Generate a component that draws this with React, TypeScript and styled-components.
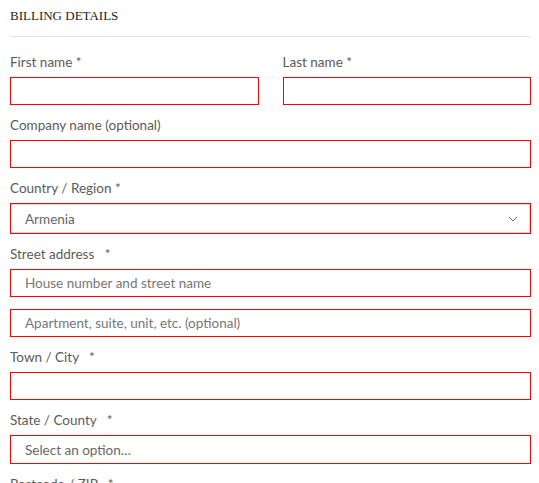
import styled, { createGlobalStyle } from "styled-components";

const Global = createGlobalStyle`
  body {
    margin: 0;
    background: #fff;
    font-family: Lato, "Open Sans", sans-serif;
  }
`;

const Page = styled.div`
  padding: 0 8px 0 10px;
`;

const Heading = styled.h3`
  margin: 0;
  padding: 8px 0 12px;
  font-family: "Liberation Serif", serif;
  font-weight: normal;
  font-size: 13px;
  line-height: 16px;
  color: #222;
  text-transform: uppercase;
  border-bottom: 1px solid #e2e2e2;
`;

const Fields = styled.div`
  display: flex;
  flex-direction: column;
  gap: 11px;
  padding-top: 16px;
`;

const Row = styled.div`
  display: grid;
  grid-template-columns: 1fr 1fr;
  gap: 24px;
`;

const Field = styled.div`
  display: flex;
  flex-direction: column;
  gap: 6px;
`;

const Label = styled.label`
  font-size: 13.5px;
  line-height: 18px;
  color: #5b5b5b;
  white-space: pre;
`;

const Input = styled.input`
  box-sizing: border-box;
  width: 100%;
  height: 28px;
  margin: 0;
  padding: 0 14px;
  border: 1px solid #ff0000;
  border-radius: 0;
  font-family: inherit;
  font-size: 13.5px;
  color: #555;
  outline: none;
  &::placeholder {
    color: #777;
  }
`;

const Extra = styled(Input)`
  margin-top: 6px;
`;

const Select = styled.div<{ $tall?: boolean }>`
  box-sizing: border-box;
  height: ${({ $tall }) => ($tall ? "31px" : "29px")};
  display: flex;
  align-items: center;
  justify-content: space-between;
  padding: 0 12px 0 14px;
  border: 1px solid #ff0000;
  box-shadow: ${({ $tall }) =>
    $tall ? "inset -1px 0 0 #d8d8d8, inset 0 1px 0 #d8d8d8, inset 0 -1px 0 #d8d8d8" : "none"};
  font-size: 13.5px;
  color: #666;
`;

const Chevron = () => (
  <svg width="10" height="6" viewBox="0 0 10 6" fill="none">
    <path d="M1 1l4 4 4-4" stroke="#666" strokeWidth="1" />
  </svg>
);

export default function App() {
  return (
    <Page>
      <Global />
      <Heading>Billing details</Heading>
      <Fields>
        <Row>
          <Field>
            <Label>First name *</Label>
            <Input />
          </Field>
          <Field>
            <Label>Last name *</Label>
            <Input />
          </Field>
        </Row>
        <Field>
          <Label>Company name (optional)</Label>
          <Input />
        </Field>
        <Field>
          <Label>Country / Region *</Label>
          <Select $tall>
            <span>Armenia</span>
            <Chevron />
          </Select>
        </Field>
        <Field>
          <Label>Street address   *</Label>
          <Input placeholder="House number and street name" />
          <Extra placeholder="Apartment, suite, unit, etc. (optional)" />
        </Field>
        <Field>
          <Label>Town / City   *</Label>
          <Input />
        </Field>
        <Field>
          <Label>State / County   *</Label>
          <Select>
            <span>Select an option…</span>
          </Select>
        </Field>
        <Field>
          <Label>Postcode / ZIP   *</Label>
          <Input />
        </Field>
      </Fields>
    </Page>
  );
}
